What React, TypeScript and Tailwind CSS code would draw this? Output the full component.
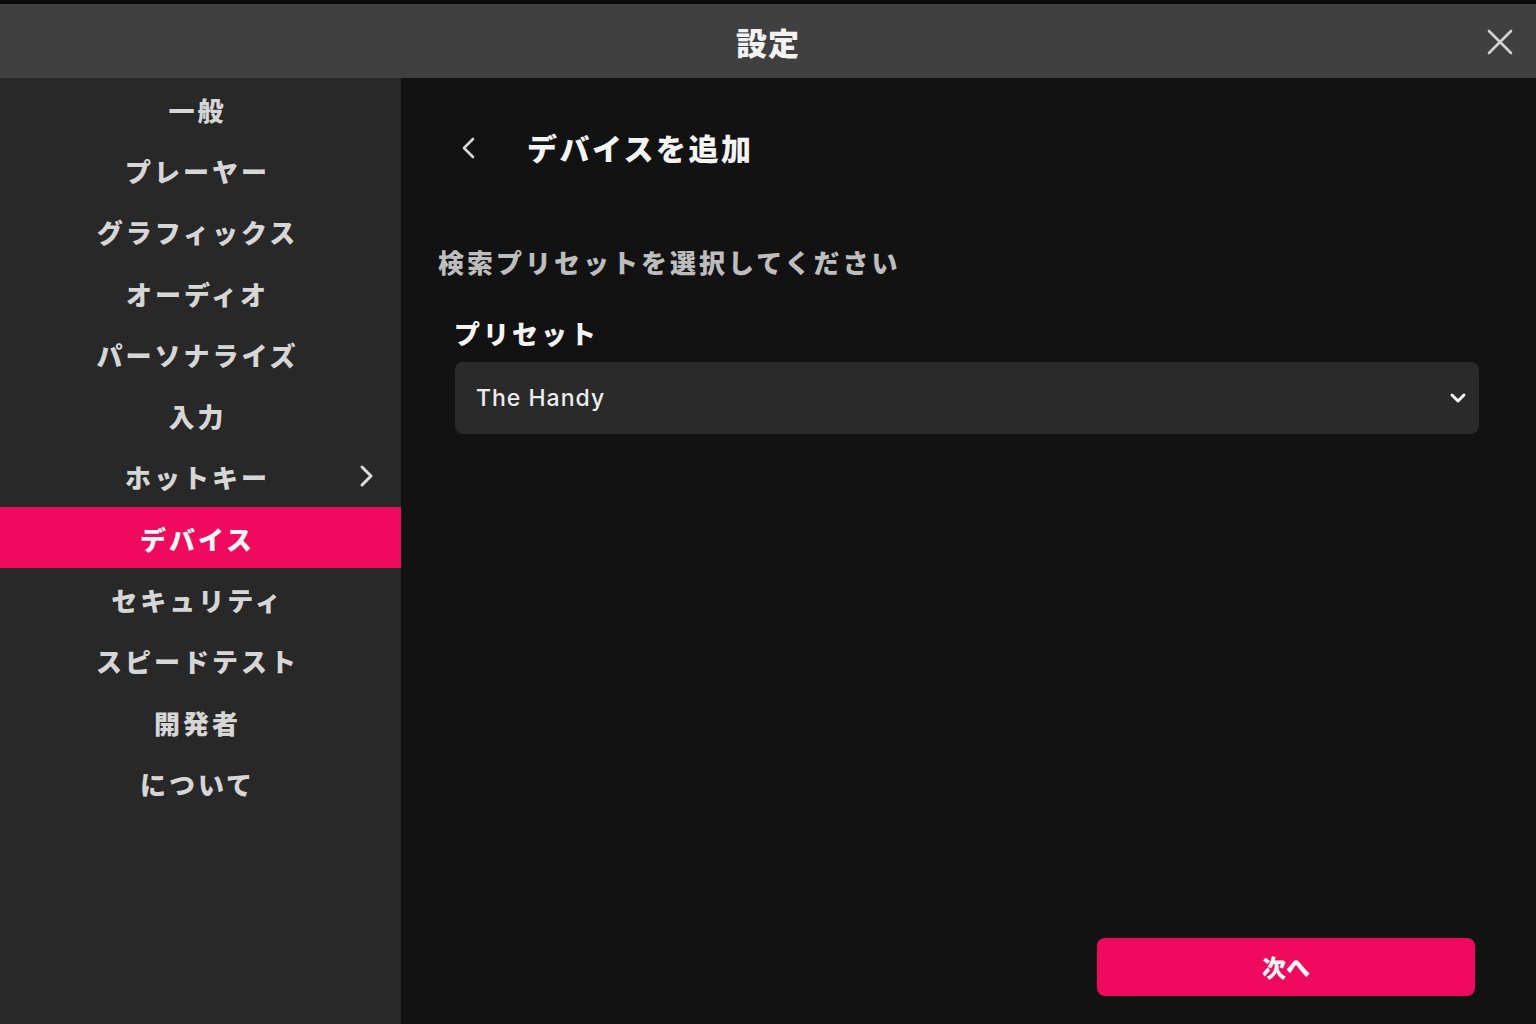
import React from 'react';

const menuItems = [
  { id: 'general', label: '一般' },
  { id: 'player', label: 'プレーヤー' },
  { id: 'graphics', label: 'グラフィックス' },
  { id: 'audio', label: 'オーディオ' },
  { id: 'personalize', label: 'パーソナライズ' },
  { id: 'input', label: '入力' },
  { id: 'hotkey', label: 'ホットキー', hasChildren: true },
  { id: 'device', label: 'デバイス' },
  { id: 'security', label: 'セキュリティ' },
  { id: 'speedtest', label: 'スピードテスト' },
  { id: 'developer', label: '開発者' },
  { id: 'about', label: 'について' },
];

const jp = { fontFamily: '"Noto Sans CJK JP", "Noto Sans", sans-serif' };

const Sidebar: React.FC<{ active: string }> = ({ active }) => (
  <div className="w-[401px] shrink-0 bg-[#282828] flex flex-col">
    {menuItems.map((item) => {
      const isActive = item.id === active;
      return (
        <div
          key={item.id}
          className={`relative h-[61.3px] shrink-0 flex items-center justify-center pr-[6px] pt-[2px] ${isActive ? 'bg-[#ef0a5e] text-[#f4f4f4]' : 'text-[#d6d6d6]'}`}
        >
          <span className="text-[26px] font-black tracking-[3px] leading-none" style={jp}>
            {item.label}
          </span>
          {item.hasChildren && (
            <svg className="absolute right-[27px] top-1/2 -translate-y-1/2" width="16" height="24" viewBox="0 0 16 24" fill="none">
              <polyline points="4,3 13,12 4,21" stroke="#dcdcdc" strokeWidth="3" strokeLinecap="round" strokeLinejoin="round" />
            </svg>
          )}
        </div>
      );
    })}
  </div>
);

export default function App() {
  return (
    <div className="w-[1536px] h-[1024px] flex flex-col bg-[#0b0b0b] overflow-hidden" style={jp}>
      <div className="h-[4px] shrink-0 bg-[#0b0b0b]" />

      {/* title bar */}
      <div className="h-[74px] shrink-0 bg-[#404040] flex items-center">
        <div className="w-[72px]" />
        <div className="flex-1 text-center text-[31px] font-black text-[#f2f2f2] leading-none tracking-[1px]">設定</div>
        <div className="w-[72px] flex items-center justify-center pt-[2px]">
          <svg width="26" height="26" viewBox="0 0 26 26" fill="none">
            <line x1="2" y1="2" x2="24" y2="24" stroke="#d2d2d2" strokeWidth="2.6" strokeLinecap="round" />
            <line x1="24" y1="2" x2="2" y2="24" stroke="#d2d2d2" strokeWidth="2.6" strokeLinecap="round" />
          </svg>
        </div>
      </div>

      <div className="flex flex-1 min-h-0">
        <Sidebar active="device" />

        <div className="flex-1 bg-[#121212] flex flex-col">
          {/* header */}
          <div className="mt-[39px] h-[60px] flex items-center pl-[58px]">
            <svg width="18" height="24" viewBox="0 0 18 24" fill="none" className="mt-[2px]">
              <polyline points="14,3 5,12 14,21" stroke="#d8d8d8" strokeWidth="2.6" strokeLinecap="round" strokeLinejoin="round" />
            </svg>
            <span className="ml-[50px] text-[30px] font-black text-[#f4f4f4] tracking-[2.5px] leading-none">デバイスを追加</span>
          </div>

          <div className="mt-[67px] pl-[37px] h-[36px] flex items-center">
            <span className="text-[26px] font-black text-[#bdbdbd] tracking-[3px] leading-none">検索プリセットを選択してください</span>
          </div>

          <div className="mt-[35px] pl-[53px] h-[36px] flex items-center">
            <span className="text-[26px] font-black text-[#f4f4f4] tracking-[3px] leading-none">プリセット</span>
          </div>

          <div className="mt-[11px] ml-[54px] mr-[57px] h-[72px] rounded-[8px] bg-[#2a2a2a] flex items-center justify-between pl-[21px] pr-[12px]">
            <span className="text-[23px] font-medium text-[#ededed] tracking-[1px]" style={{ fontFamily: 'Inter, "Noto Sans", sans-serif' }}>
              The Handy
            </span>
            <svg width="18" height="14" viewBox="0 0 18 14" fill="none">
              <polyline points="3,4 9,10 15,4" stroke="#f4f4f4" strokeWidth="3" strokeLinecap="round" strokeLinejoin="round" />
            </svg>
          </div>

          <div className="mt-auto flex justify-end pr-[61px] pb-[28px]">
            <button className="w-[378px] h-[58px] rounded-[8px] bg-[#ef0a5e] flex items-center justify-center">
              <span className="text-[24px] font-black text-[#f6f6f6] leading-none" style={jp}>次へ</span>
            </button>
          </div>
        </div>
      </div>
    </div>
  );
}
